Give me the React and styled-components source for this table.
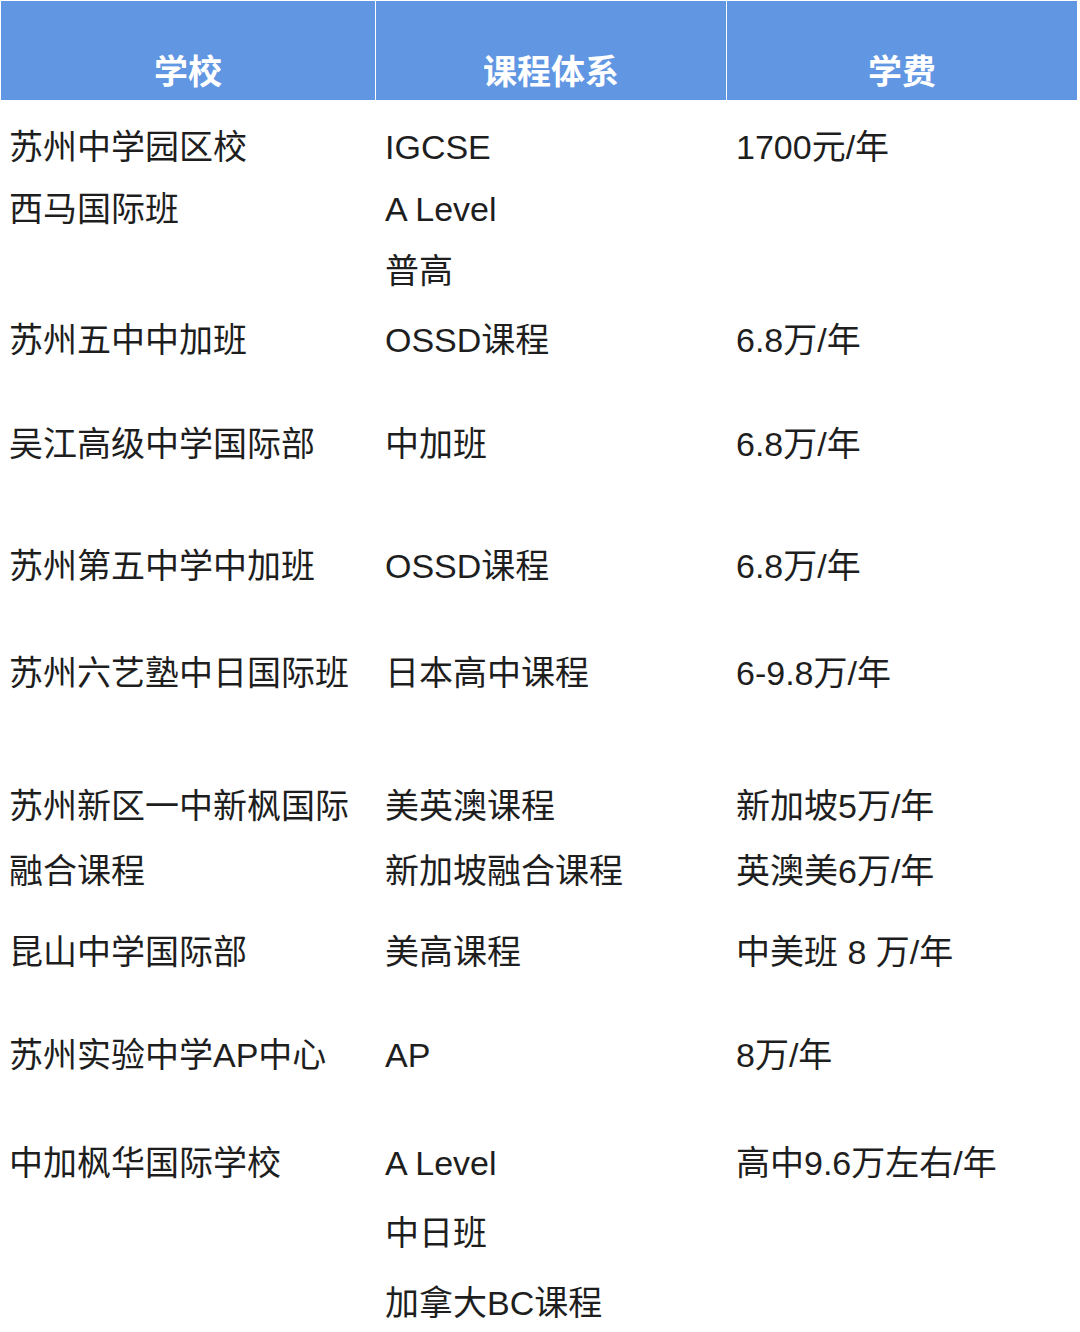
import React from "react";
import styled, { createGlobalStyle } from "styled-components";

const GlobalStyle = createGlobalStyle`
  body {
    margin: 0;
    background: #ffffff;
    font-family: "Liberation Sans", "Noto Sans CJK SC", sans-serif;
  }
`;

const rows = [
  { gap: 16, lh: 62, school: ["苏州中学园区校", "西马国际班"], course: ["IGCSE", "A Level", "普高"], fee: ["1700元/年"] },
  { gap: 7, lh: 62, school: ["苏州五中中加班"], course: ["OSSD课程"], fee: ["6.8万/年"] },
  { gap: 42, lh: 62, school: ["吴江高级中学国际部"], course: ["中加班"], fee: ["6.8万/年"] },
  { gap: 60, lh: 62, school: ["苏州第五中学中加班"], course: ["OSSD课程"], fee: ["6.8万/年"] },
  { gap: 45, lh: 62, school: ["苏州六艺塾中日国际班"], course: ["日本高中课程"], fee: ["6-9.8万/年"] },
  { gap: 70, lh: 65, school: ["苏州新区一中新枫国际", "融合课程"], course: ["美英澳课程", "新加坡融合课程"], fee: ["新加坡5万/年", "英澳美6万/年"] },
  { gap: 17, lh: 62, school: ["昆山中学国际部"], course: ["美高课程"], fee: ["中美班 8 万/年"] },
  { gap: 41, lh: 62, school: ["苏州实验中学AP中心"], course: ["AP"], fee: ["8万/年"] },
  { gap: 42, lh: 70, school: ["中加枫华国际学校"], course: ["A Level", "中日班", "加拿大BC课程"], fee: ["高中9.6万左右/年"] },
];

function App() {
  return (
    <>
      <GlobalStyle />
      <Table>
        <HeaderRow>
          <HeadCell>学校</HeadCell>
          <HeadCell>课程体系</HeadCell>
          <HeadCell>学费</HeadCell>
        </HeaderRow>
        {rows.map((row, i) => (
          <Row key={i} $gap={row.gap} $lh={row.lh}>
            <Cell $pad={8}>
              {row.school.map((t) => (
                <Line key={t}>{t}</Line>
              ))}
            </Cell>
            <Cell $pad={9}>
              {row.course.map((t) => (
                <Line key={t}>{t}</Line>
              ))}
            </Cell>
            <Cell $pad={9}>
              {row.fee.map((t) => (
                <Line key={t}>{t}</Line>
              ))}
            </Cell>
          </Row>
        ))}
      </Table>
    </>
  );
}

export default App;

const columns = "374px 350px 350px";

const Table = styled.div`
  width: 1080px;
  height: 1332px;
  overflow: hidden;
  padding: 1px 3px 0 1px;
  box-sizing: border-box;
`;

const HeaderRow = styled.div`
  display: grid;
  grid-template-columns: ${columns};
  column-gap: 1px;
  height: 99px;
`;

const HeadCell = styled.div`
  background: #6096e2;
  color: #ffffff;
  font-family: "Noto Sans CJK SC", sans-serif;
  font-weight: 700;
  font-size: 34px;
  display: flex;
  align-items: center;
  justify-content: center;
  padding-top: 38px;
  box-sizing: border-box;
`;

const Row = styled.div`
  display: grid;
  grid-template-columns: ${columns};
  column-gap: 1px;
  margin-top: ${(p) => p.$gap}px;
  line-height: ${(p) => p.$lh}px;
`;

const Cell = styled.div`
  padding-left: ${(p) => p.$pad}px;
  color: #1e1e1e;
  font-size: 34px;
  white-space: nowrap;
`;

const Line = styled.div``;
